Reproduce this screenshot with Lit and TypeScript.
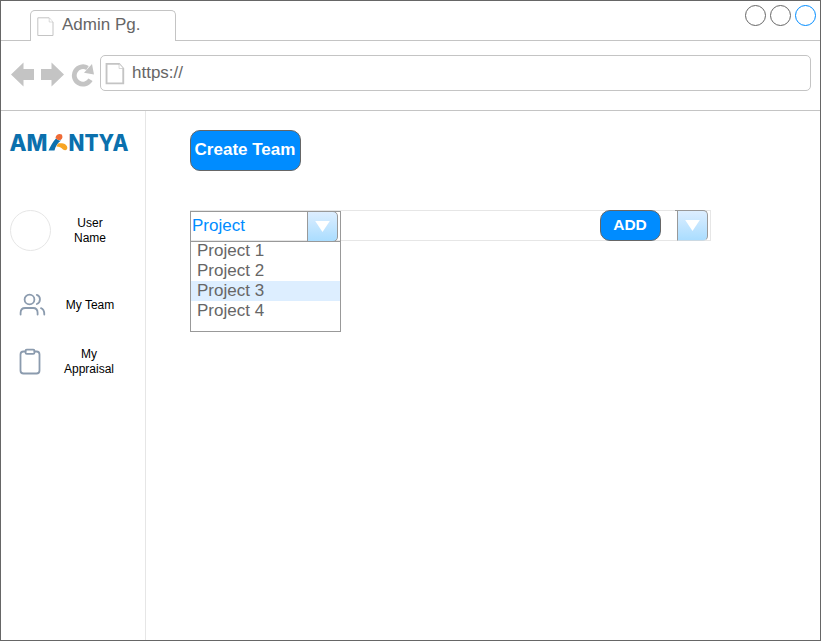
import { LitElement, html, css } from "lit";
import { customElement, property } from "lit/decorators.js";
import { classMap } from "lit/directives/class-map.js";

@customElement("page-icon")
class PageIcon extends LitElement {
  @property({ type: Number }) weight = 1;

  static styles = css`
    :host { display: block; }
    svg { display: block; width: 100%; height: 100%; fill: #fff; stroke: #c4c4c4; }
  `;

  render() {
    return html`<svg viewBox="0 0 17 20">
      <path d="M0.8 0.8H12.2L16 5V18.5H0.8Z" stroke-width=${this.weight}></path>
      <path d="M12.2 1V5H16" stroke-width="0.6"></path>
    </svg>`;
  }
}

@customElement("drop-button")
class DropButton extends LitElement {
  static styles = css`
    :host {
      display: flex;
      align-items: center;
      justify-content: center;
      box-sizing: border-box;
      width: 31px;
      height: 30px;
      border: 1px solid #999;
      border-radius: 0 5px 5px 0;
      background: linear-gradient(#ddeeff, #aaddff);
    }
    svg { display: block; width: 15px; height: 11px; fill: #fff; }
  `;

  render() {
    return html`<svg viewBox="0 0 15 11"><path d="M0.2 0H14.8L7.5 11Z"></path></svg>`;
  }
}

@customElement("app-root")
class AppRoot extends LitElement {
  private projects = ["Project 1", "Project 2", "Project 3", "Project 4"];
  private selected = "Project 3";

  static styles = css`
    :host {
      display: flex;
      flex-direction: column;
      box-sizing: border-box;
      width: 821px;
      height: 641px;
      border: 1px solid #666;
      background: #fff;
      font-family: "Liberation Sans", Arial, sans-serif;
      font-size: 17px;
      line-height: 20px;
      color: #666;
      overflow: hidden;
    }
    svg { display: block; }
    .tabs {
      display: flex;
      box-sizing: border-box;
      height: 40px;
      flex: none;
      padding: 9px 0 0 29px;
      border-bottom: 1px solid #c4c4c4;
    }
    .tab {
      display: flex;
      box-sizing: border-box;
      width: 146px;
      height: 31px;
      padding: 4px 0 0 6px;
      border: 1px solid #c4c4c4;
      border-bottom: 0;
      border-radius: 5px 5px 0 0;
      background: #fff;
    }
    .tab page-icon { width: 17px; height: 20px; margin: 2px 8px 0 0; }
    .windows { display: flex; gap: 4px; margin: -5px 4px 0 auto; }
    .dot {
      box-sizing: border-box;
      width: 21px;
      height: 21px;
      border: 1px solid #666;
      border-radius: 50%;
    }
    .dot.active { border-color: #008cff; }
    .toolbar {
      display: flex;
      box-sizing: border-box;
      flex: none;
      height: 70px;
      padding: 14px 9px 0 10px;
      border-bottom: 1px solid #c4c4c4;
    }
    .nav { width: 83px; height: 26px; margin: 6px -4px 0 0; fill: #c4c4c4; }
    .address {
      display: flex;
      flex: 1;
      box-sizing: border-box;
      height: 36px;
      margin-left: 10px;
      padding: 7px 0 0 4px;
      border: 1px solid #c4c4c4;
      border-radius: 5px;
    }
    .address page-icon { width: 20px; height: 22px; margin-right: 7px; }
    .body { display: flex; flex: 1; min-height: 0; }
    .side {
      box-sizing: border-box;
      width: 145px;
      flex: none;
      padding: 18px 0 0 9px;
      border-right: 1px solid #e6e6e6;
      font-size: 12px;
      line-height: 15px;
      color: #000;
    }
    .logo { width: 120px; height: 28px; margin-bottom: 53px; overflow: visible; }
    .logo text {
      font-family: Inter, "Open Sans", sans-serif;
      font-weight: 800;
      font-size: 23px;
      fill: #0b70ad;
    }
    .item { display: flex; align-items: center; }
    .item .pic { width: 41px; flex: none; }
    .item .label { width: 78px; text-align: center; }
    .user { height: 41px; }
    .avatar {
      box-sizing: border-box;
      height: 41px;
      border: 1px solid #e6e6e6;
      border-radius: 50%;
    }
    .team { height: 30px; margin-top: 39px; }
    .appraisal { height: 30px; margin-top: 27px; }
    .appraisal .label { width: 76px; }
    .line { fill: none; stroke: #8b9bae; stroke-width: 1.8; stroke-linecap: round; stroke-linejoin: round; }
    .main { flex: 1; padding: 19px 0 0 44px; }
    .btn {
      display: block;
      box-sizing: border-box;
      padding: 0;
      border: 1px solid #666;
      border-radius: 10px;
      background: #008cff;
      color: #fff;
      font: bold 17px/20px "Liberation Sans", Arial, sans-serif;
      white-space: nowrap;
    }
    .create { width: 111px; height: 41px; padding: 0 1px 1px 0; }
    .row {
      display: flex;
      box-sizing: border-box;
      width: 521px;
      height: 31px;
      margin-top: 39px;
      border: 1px solid #e6e6e6;
    }
    .picker { width: 151px; margin-left: -1px; flex: none; }
    .field {
      display: flex;
      box-sizing: border-box;
      height: 31px;
      border: 1px solid #999;
      color: #008cff;
    }
    .field span { width: 115px; padding: 4px 0 0 1px; }
    .field drop-button { margin-top: -1px; height: 31px; }
    .list {
      box-sizing: border-box;
      height: 91px;
      margin-top: -1px;
      border: 1px solid #999;
      background: #fff;
    }
    .option { height: 20px; padding-left: 6px; line-height: 20px; }
    .option:first-child { height: 19px; line-height: 18px; }
    .option.on { background: #ddeeff; }
    .add { width: 61px; height: 31px; margin: -1px 0 0 259px; font-size: 15.5px; padding: 0 1px 1px 0; }
    .stub { width: 2px; height: 1px; margin: -1px 0 0 14px; background: #999; }
    .row > drop-button { height: 31px; margin-top: -1px; border-bottom-color: #ccd9e2; }
  `;

  render() {
    return html`
      <header class="tabs">
        <div class="tab"><page-icon></page-icon><span>Admin Pg.</span></div>
        <div class="windows">
          <i class="dot"></i><i class="dot"></i><i class="dot active"></i>
        </div>
      </header>
      <nav class="toolbar">
        <svg class="nav" viewBox="0 0 83 26">
          <path d="M0 13.5L12.5 1.5V8H23V19H12.5V25.5Z"></path>
          <path d="M53 13.5L40.5 1.5V8H30V19H40.5V25.5Z"></path>
          <path d="M79.5 18.8A8.7 8.7 0 1 1 76.5 7" fill="none" stroke="#c4c4c4" stroke-width="4.8"></path>
          <path d="M81 3L83 13.5L73 11.8Z"></path>
        </svg>
        <div class="address"><page-icon weight="1.7"></page-icon><span>https://</span></div>
      </nav>
      <div class="body">
        <aside class="side">
          <svg class="logo" viewBox="0 0 120 28">
            <text x="-0.5" y="21.5" textLength="38" lengthAdjust="spacingAndGlyphs">AM</text>
            <text x="58.5" y="21.5" textLength="60" lengthAdjust="spacingAndGlyphs">NTYA</text>
            <path d="M38.5 21.5C40.5 17 43 12.5 46 9.5C47.5 11 49.5 11.8 51 11.5C47.5 14 45.5 17.5 44.5 21.5Z" fill="#0b70ad"></path>
            <path d="M45.5 9C45.8 5.3 49.5 4.2 51.8 5.6C53 8 52.6 10.3 50.5 11C48 11.2 46.5 10.4 45.5 9Z" fill="#ef6b36"></path>
            <path d="M48 14.6C51.5 13.4 57 14.5 57.3 18.5C57.5 21.3 55 22 53 20.5C51.5 18.7 49 17.8 46.5 17.6Z" fill="#f7a523"></path>
          </svg>
          <div class="item user"><div class="pic avatar"></div><div class="label">User<br>Name</div></div>
          <div class="item team">
            <svg class="pic" viewBox="0 0 41 30">
              <g class="line">
                <circle cx="19.5" cy="9.5" r="4.9"></circle>
                <path d="M10.6 24.5V22.8C10.6 19.8 12.6 18 15.2 18H23C25.6 18 27.6 19.8 27.6 22.8V24.5"></path>
                <path d="M26.8 4.8C31 6 31 12.7 26.8 14M31 18.2C33.5 19 34.3 21 34.3 24.5"></path>
              </g>
            </svg>
            <div class="label">My Team</div>
          </div>
          <div class="item appraisal">
            <svg class="pic" viewBox="0 0 41 30">
              <g class="line">
                <path d="M15.5 4.5H13.5Q10.5 4.5 10.5 7.5V23.5Q10.5 26.5 13.5 26.5H26.5Q29.5 26.5 29.5 23.5V7.5Q29.5 4.5 26.5 4.5H24.5"></path>
                <rect x="15.5" y="2.7" width="9" height="4.2" rx="1.3"></rect>
              </g>
            </svg>
            <div class="label">My<br>Appraisal</div>
          </div>
        </aside>
        <main class="main">
          <button class="btn create">Create Team</button>
          <section class="row">
            <div class="picker">
              <div class="field"><span>Project</span><drop-button></drop-button></div>
              <div class="list">
                ${this.projects.map(
                  (p) => html`<div class=${classMap({ option: true, on: p === this.selected })}>${p}</div>`
                )}
              </div>
            </div>
            <button class="btn add">ADD</button>
            <i class="stub"></i>
            <drop-button></drop-button>
          </section>
        </main>
      </div>
    `;
  }
}
